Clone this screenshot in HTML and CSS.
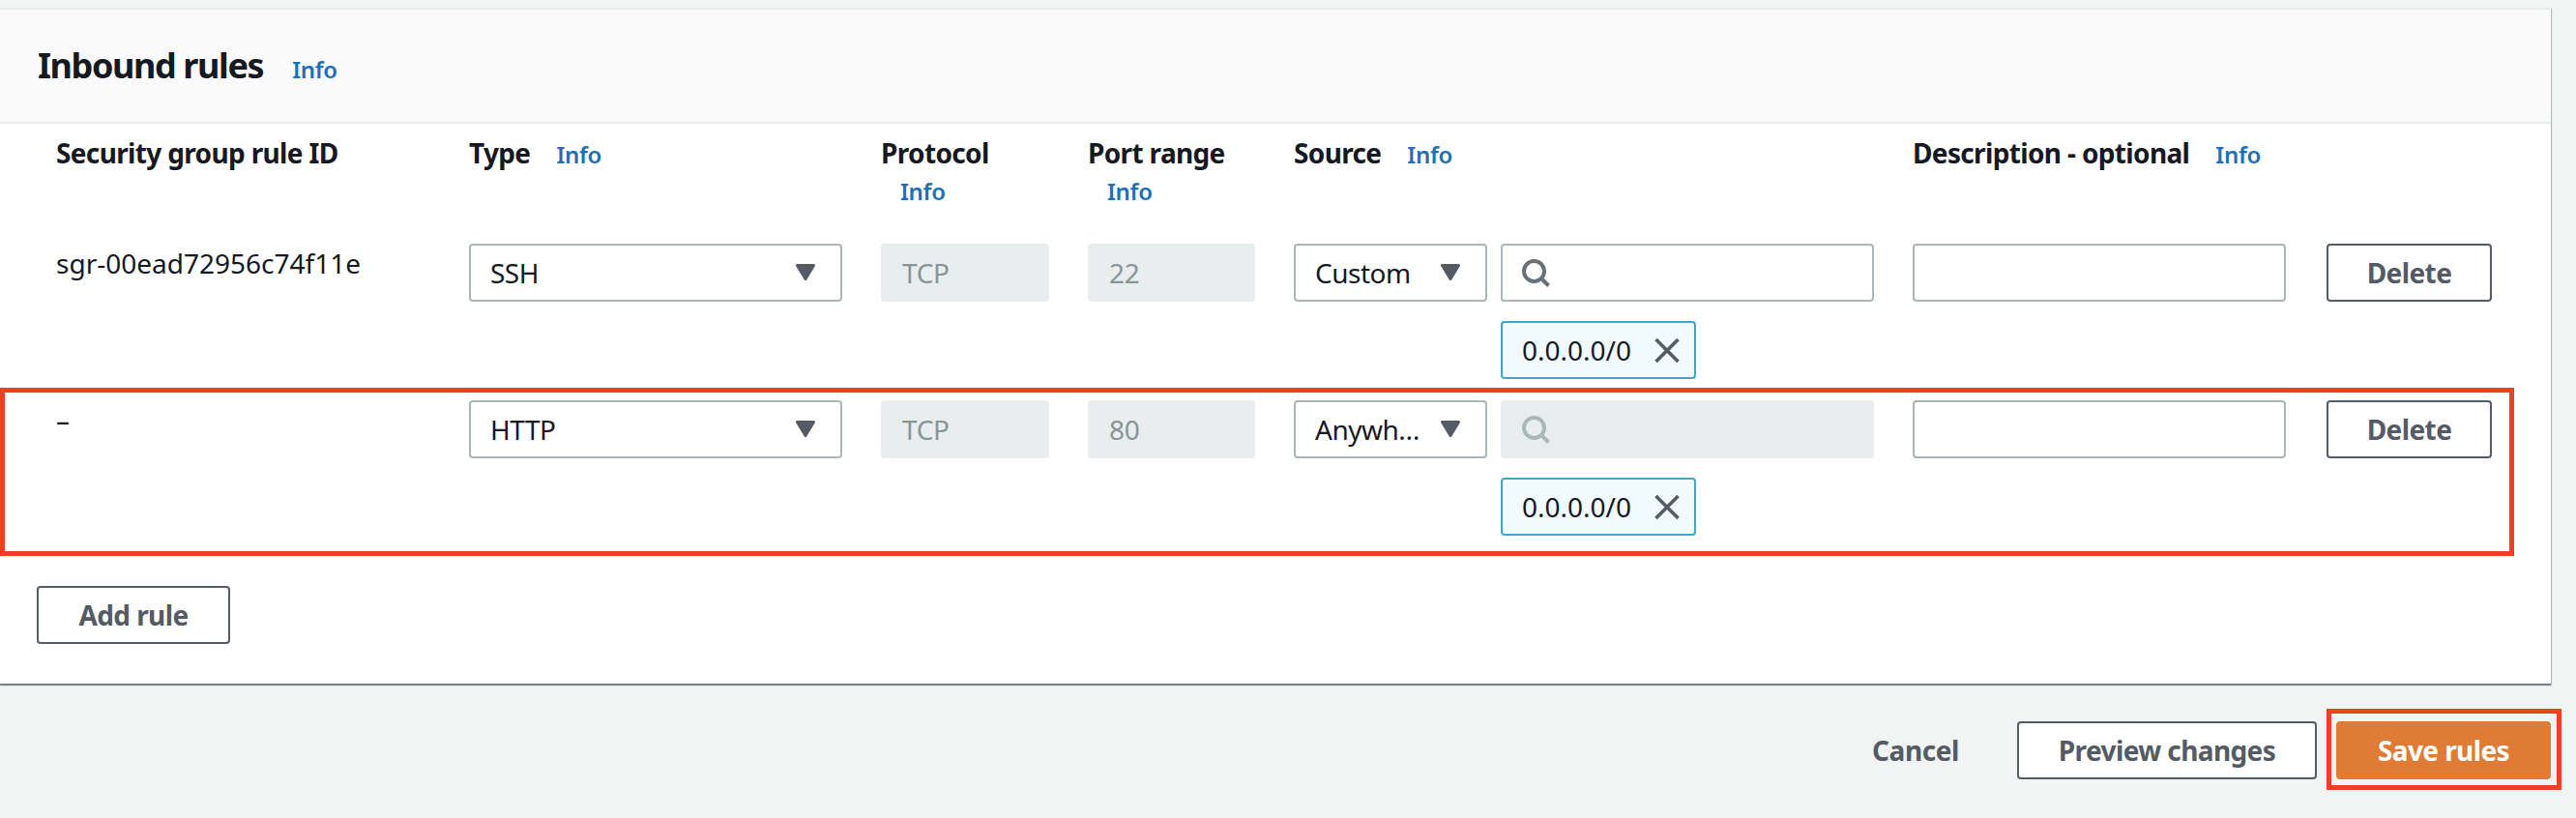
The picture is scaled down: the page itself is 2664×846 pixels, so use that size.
FILE: index.html
```html
<!DOCTYPE html>
<html lang="en">
<head>
<meta charset="utf-8">
<title>Inbound rules</title>
<link rel="stylesheet" href="styles.css">
</head>
<body>
<svg class="defs" width="0" height="0" aria-hidden="true">
  <symbol id="caret" viewBox="0 0 20 17"><path d="M1.5 1.5H18.5L10 15.5Z" fill="#545b64" stroke="#545b64" stroke-width="3" stroke-linejoin="round"/></symbol>
  <symbol id="search" viewBox="0 0 29 29"><circle cx="12.5" cy="12.5" r="10.5" fill="none" stroke="currentColor" stroke-width="4"/><path d="M19.5 19.5L27.5 27.5" fill="none" stroke="currentColor" stroke-width="4"/></symbol>
  <symbol id="close" viewBox="0 0 26 27"><path d="M1.5 2L24.5 25M24.5 2L1.5 25" fill="none" stroke="#545b64" stroke-width="3.6"/></symbol>
</svg>
<main class="page">
  <section class="panel">
    <header class="panel-head">
      <h2 class="panel-title">Inbound rules</h2>
      <a class="info title-info">Info</a>
    </header>
    <div class="rules">
      <div class="grid heads">
        <div class="head">Security group rule ID</div>
        <div class="head">Type<a class="info">Info</a></div>
        <div class="head stacked">Protocol<a class="info">Info</a></div>
        <div class="head stacked">Port range<a class="info">Info</a></div>
        <div class="head">Source<a class="info">Info</a></div>
        <div class="head">Description - optional<a class="info">Info</a></div>
        <div></div>
      </div>
      <div class="grid row">
        <div class="rule-id">sgr-00ead72956c74f11e</div>
        <div class="select"><span class="select-text">SSH</span><svg class="caret"><use href="#caret"/></svg></div>
        <div class="field disabled">TCP</div>
        <div class="field disabled">22</div>
        <div class="source">
          <div class="select"><span class="select-text">Custom</span><svg class="caret"><use href="#caret"/></svg></div>
          <div class="field search"><svg class="search-icon"><use href="#search"/></svg></div>
          <div class="chip">0.0.0.0/0<svg class="close"><use href="#close"/></svg></div>
        </div>
        <div class="field desc"></div>
        <button class="btn">Delete</button>
      </div>
      <div class="grid row second">
        <div class="annotation row-mark"></div>
        <div class="rule-id">–</div>
        <div class="select"><span class="select-text">HTTP</span><svg class="caret"><use href="#caret"/></svg></div>
        <div class="field disabled">TCP</div>
        <div class="field disabled">80</div>
        <div class="source">
          <div class="select"><span class="select-text">Anywh…</span><svg class="caret"><use href="#caret"/></svg></div>
          <div class="field search disabled"><svg class="search-icon"><use href="#search"/></svg></div>
          <div class="chip">0.0.0.0/0<svg class="close"><use href="#close"/></svg></div>
        </div>
        <div class="field desc"></div>
        <button class="btn">Delete</button>
      </div>
      <div class="add"><button class="btn add-btn">Add rule</button></div>
    </div>
  </section>
  <footer class="actions">
    <button class="btn link">Cancel</button>
    <button class="btn preview">Preview changes</button>
    <div class="save-wrap">
      <button class="btn primary">Save rules</button>
      <div class="annotation save-mark"></div>
    </div>
  </footer>
</main>
</body>
</html>
```

FILE: styles.css
```css
* { box-sizing: border-box; }
html, body { margin: 0; padding: 0; }
body {
  width: 2664px;
  height: 846px;
  overflow: hidden;
  background: #f2f3f3;
  color: #16191f;
  font-family: "Noto Sans", "Open Sans", sans-serif;
  font-size: 28px;
  line-height: 40px;
  letter-spacing: -.5px;
}
.defs { position: absolute; }
.page { padding-top: 8px; }
.panel {
  width: 2638px;
  height: 699px;
  background: #fff;
  border-top: 2px solid #eaeded;
  box-shadow: 0 2px 1px rgba(0, 28, 36, .45), 1px 1px 1px rgba(0, 28, 36, .2);
}
.panel-head {
  height: 118px;
  display: flex;
  align-items: baseline;
  padding: 36px 0 0 39px;
  background: #fafafa;
  border-bottom: 2px solid #eaeded;
}
.panel-title { margin: 0; font-size: 36px; line-height: 44px; font-weight: 700; letter-spacing: -1.4px; }
.info { margin-left: 27px; font-size: 24px; font-weight: 600; letter-spacing: -.3px; color: #1f6fb5; }
.title-info { margin-left: 30px; }
.rules { padding-left: 58px; }
.grid {
  display: grid;
  grid-template-columns: 387px 386px 174px 173px 600px 388px 171px;
  column-gap: 40px;
  align-items: start;
}
.heads { height: 124px; padding-top: 10px; }
.head { font-weight: 700; letter-spacing: -.65px; }
.stacked .info { display: block; margin: 0 0 0 20px; }
.row { height: 162px; }
.second { position: relative; height: 192px; }
.rule-id { letter-spacing: 0; }
.select, .field {
  height: 60px;
  display: flex;
  align-items: center;
  background: #fff;
  border: 2px solid #aab7b8;
  border-radius: 4px;
  padding: 0 20px;
}
.select { justify-content: space-between; padding-right: 26px; }
.select-text { flex: 1; min-width: 0; white-space: nowrap; }
.caret { flex: none; width: 20px; height: 17px; margin-left: 6px; margin-top: -2px; }
.field.disabled { background: #eaeded; border-color: #eaeded; color: #879596; letter-spacing: -.3px; }
.desc { width: 386px; }
.source {
  display: grid;
  grid-template-columns: 200px 386px;
  column-gap: 14px;
  row-gap: 20px;
}
.search { color: #687078; padding-left: 20px; }
.search.disabled { color: #aab7b8; }
.search-icon { width: 29px; height: 29px; }
.chip {
  grid-column: 2;
  width: 202px;
  height: 60px;
  display: flex;
  align-items: center;
  justify-content: space-between;
  padding: 0 15px 0 20px;
  background: #f1faff;
  border: 2px solid #44a5c9;
  border-radius: 4px;
  letter-spacing: 0;
}
.close { width: 26px; height: 27px; }
.btn {
  height: 60px;
  padding: 0;
  background: #fff;
  border: 2px solid #545b64;
  border-radius: 4px;
  color: #545b64;
  font: 700 28px/36px "Noto Sans", "Open Sans", sans-serif;
  letter-spacing: -.6px;
}
.add { margin-left: -20px; }
.add-btn { width: 200px; }
.actions {
  display: flex;
  justify-content: flex-end;
  align-items: center;
  margin-top: 39px;
  width: 2638px;
}
.link { background: none; border-color: transparent; width: 90px; margin-right: 62px; letter-spacing: -.4px; }
.preview { width: 310px; }
.save-wrap { position: relative; margin-left: 20px; }
.primary { display: block; width: 222px; background: #e07b35; border-color: #e07b35; color: #fff; }
.annotation { position: absolute; border: 5px solid #ee4023; pointer-events: none; }
.row-mark { left: -58px; top: -13px; width: 2600px; height: 174px; }
.save-mark { left: -10px; top: -13px; width: 243px; height: 84px; }
```
